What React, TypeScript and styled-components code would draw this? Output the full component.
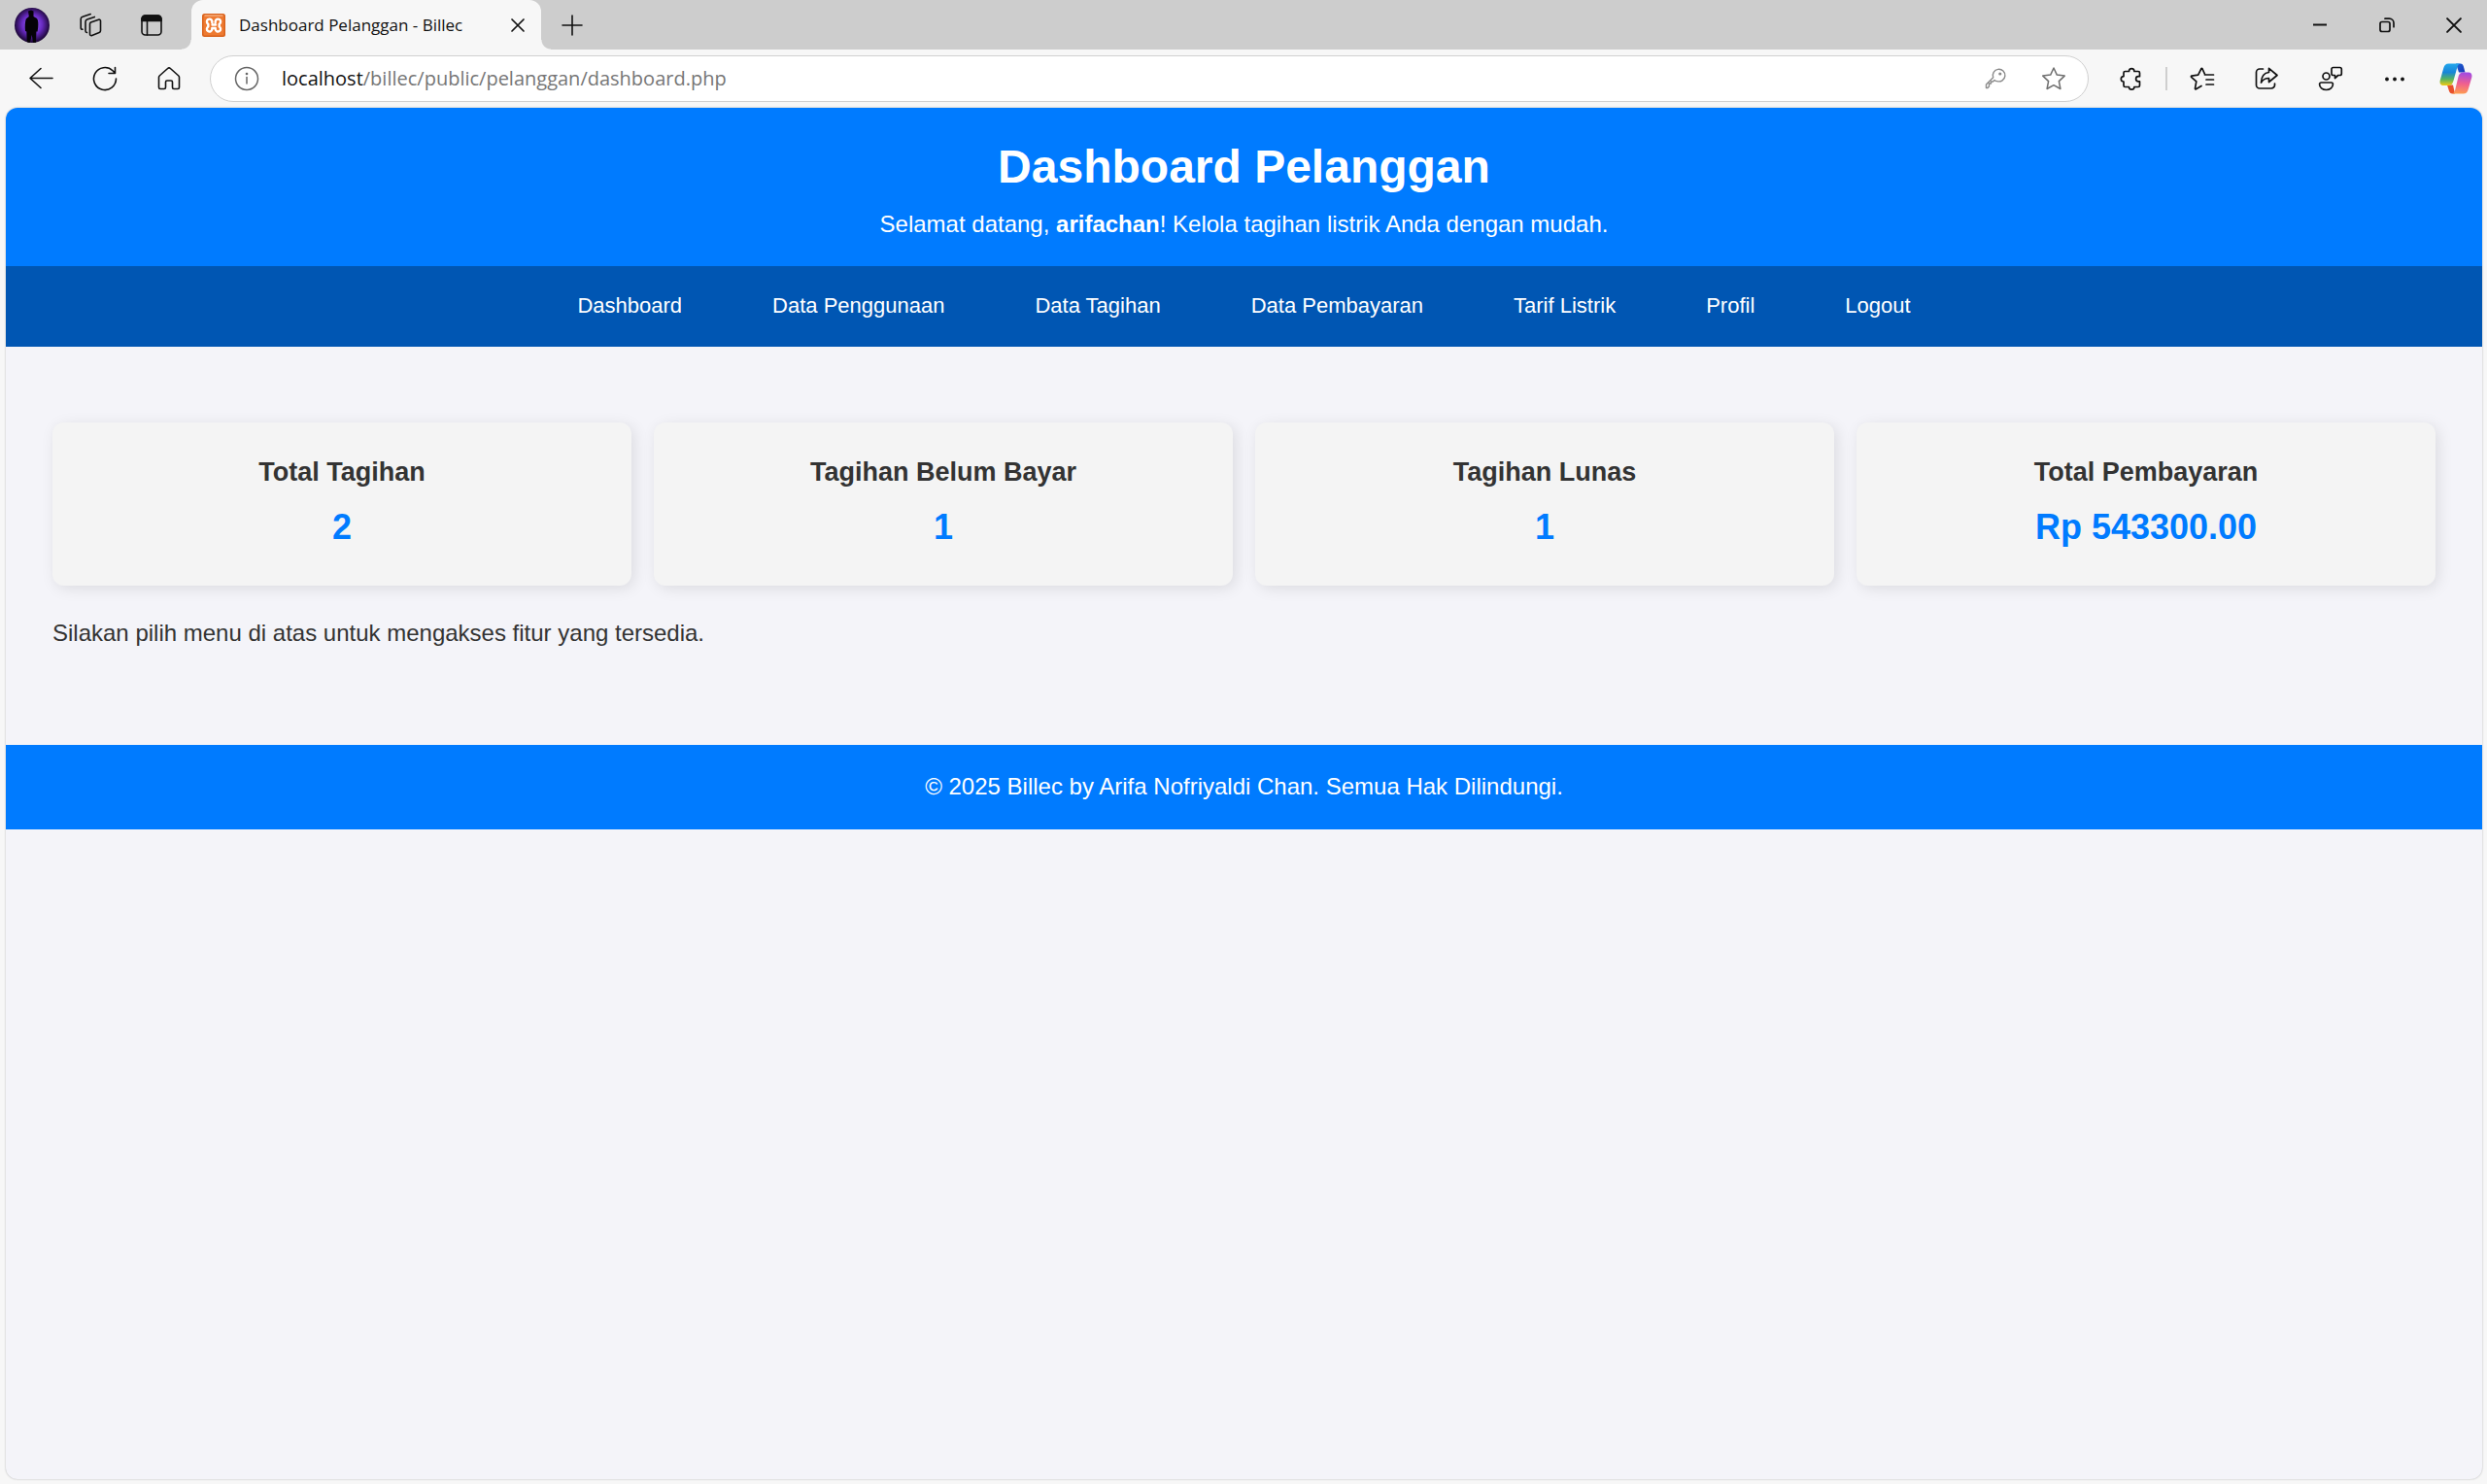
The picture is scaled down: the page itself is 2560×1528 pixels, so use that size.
import React from "react";
import styled, { createGlobalStyle, css } from "styled-components";

const GlobalStyle = createGlobalStyle`
  * { box-sizing: border-box; }
  body {
    margin: 0;
    background: #f7f7f7;
    font-family: "Liberation Sans", Arial, sans-serif;
  }
  button { font: inherit; cursor: pointer; }
`;

const uiFont = css`
  font-family: "Open Sans", "Noto Sans", sans-serif;
`;

const Window = styled.div`
  min-height: 100vh;
  display: flex;
  flex-direction: column;
  background: #f7f7f7;
`;

const TabStrip = styled.div`
  display: flex;
  align-items: stretch;
  height: 51px;
  background: #cdcdcd;
`;

const IconButton = styled.button<{ $width?: number; $color?: string }>`
  display: flex;
  align-items: center;
  justify-content: center;
  flex: none;
  width: ${(p) => p.$width ?? 66}px;
  padding: 0;
  border: 0;
  background: transparent;
  color: ${(p) => p.$color ?? "#111"};
`;

const Tab = styled.div`
  position: relative;
  display: flex;
  align-items: center;
  gap: 14px;
  width: 360px;
  margin-left: 5px;
  padding-left: 11px;
  border-radius: 12px 12px 0 0;
  background: #f7f7f7;

  &::before,
  &::after {
    content: "";
    position: absolute;
    bottom: 0;
    width: 10px;
    height: 10px;
  }
  &::before {
    right: 100%;
    background: radial-gradient(circle at 0 0, transparent 9px, #f7f7f7 10px);
  }
  &::after {
    left: 100%;
    background: radial-gradient(circle at 100% 0, transparent 9px, #f7f7f7 10px);
  }
`;

const TabTitle = styled.span`
  ${uiFont}
  flex: 1;
  font-size: 17px;
  line-height: 24px;
  white-space: nowrap;
  color: #111;
`;

const WindowControls = styled.div`
  display: flex;
  margin-left: auto;
`;

const Toolbar = styled.div`
  display: flex;
  align-items: stretch;
  height: 60px;
  padding: 0 2px 0 9px;
`;

const AddressBar = styled.label`
  display: flex;
  align-items: center;
  flex: 1;
  margin: 6px 11px 6px 9px;
  border: 1px solid #d0d0d0;
  border-radius: 24px;
  background: #fff;
`;

const addressText = css`
  ${uiFont}
  font-size: 20px;
  line-height: 28px;
`;

const Host = styled.span`
  ${addressText}
  color: #111;
`;

const PathInput = styled.input`
  ${addressText}
  flex: 1;
  min-width: 0;
  padding: 0;
  border: 0;
  outline: 0;
  background: transparent;
  color: #767676;
`;

const Separator = styled.span`
  align-self: center;
  width: 2px;
  height: 24px;
  margin: 0 3px 0 2px;
  background: #cfcfcf;
`;

const Page = styled.div`
  flex: 1;
  margin: 0 5px 5px 6px;
  overflow: hidden;
  border-radius: 12px;
  background: #f4f4f9;
  box-shadow: 0 0 2px rgba(0, 0, 0, 0.3);
  color: #333;
`;

const Header = styled.header`
  padding: 30px 24px 24px;
  background: #007bff;
  color: #fff;
  text-align: center;
`;

const Title = styled.h1`
  margin: 0 0 9px;
  font-size: 48px;
  line-height: 62px;
`;

const Text = styled.p`
  margin: 0;
  font-size: 24px;
  line-height: 38px;
`;

const Nav = styled.nav`
  display: flex;
  flex-wrap: wrap;
  justify-content: center;
  gap: 0 93px;
  padding: 23px 24px 24px;
  background: #0056b3;
`;

const NavLink = styled.a`
  color: #fff;
  font-size: 22px;
  line-height: 36px;
  text-decoration: none;
`;

const Main = styled.main`
  padding: 78px 48px 96px;
`;

const Cards = styled.div`
  display: grid;
  grid-template-columns: repeat(4, 1fr);
  gap: 23px;
  margin-bottom: 30px;
`;

const Card = styled.section`
  padding: 30px;
  border-radius: 12px;
  background: #f4f4f4;
  box-shadow: 3px 3px 15px rgba(0, 0, 0, 0.1);
  text-align: center;
`;

const CardTitle = styled.h3`
  margin: 0 0 6px;
  font-size: 27px;
  line-height: 42px;
`;

const CardValue = styled.p`
  margin: 0;
  color: #007bff;
  font-size: 36px;
  font-weight: bold;
  line-height: 60px;
`;

const Footer = styled.footer`
  padding: 24px 24px 25px;
  background: #007bff;
  color: #fff;
  text-align: center;
`;

const Line = ({ children, size = 26, w = 1.6 }: { children: React.ReactNode; size?: number; w?: number }) => (
  <svg width={size} height={size} viewBox="0 0 26 26" fill="none" stroke="currentColor" strokeWidth={w} strokeLinecap="round" strokeLinejoin="round" aria-hidden="true">
    {children}
  </svg>
);

const Avatar = () => (
  <svg width="36" height="36" viewBox="0 0 36 36" aria-hidden="true">
    <defs>
      <radialGradient id="glow" cx=".5" cy=".48" r=".52">
        <stop offset="0" stopColor="#a070ff" />
        <stop offset=".55" stopColor="#6a2cc4" />
        <stop offset="1" stopColor="#180430" />
      </radialGradient>
      <clipPath id="round"><circle cx="18" cy="18" r="18" /></clipPath>
    </defs>
    <g clipPath="url(#round)">
      <rect width="36" height="36" fill="url(#glow)" />
      <path d="M14 3.500l3-1 2.500 1v5.500l3.500 2c1.500 2 1.500 6 1.200 9l-.6 4.500h-1.200L22 36h-3l-1.200-8-2 8h-3l-.5-11.500-1.300-.5c-.5-5-.2-9.500.8-12.500l3-2.500z" fill="#050208" />
    </g>
  </svg>
);

const Workspaces = () => (
  <Line>
    <path d="M13.500 10l8-2.800a1.500 1.500 0 0 1 2 1.400v10a2 2 0 0 1-1.300 1.900l-7.500 3a1.500 1.500 0 0 1-2.200-1.400V12a2 2 0 0 1 1-2z" />
    <path d="M9.500 20.500a1.800 1.800 0 0 1-1.500-1.800V9.500A2.500 2.500 0 0 1 9.700 7l7.600-2.600" />
    <path d="M5 17.200a1.800 1.800 0 0 1-1.800-1.800V6.500A2.500 2.500 0 0 1 5 4.200l8.200-2.700" />
  </Line>
);

const TabActions = () => (
  <Line>
    <rect x="3" y="3" width="20" height="20" rx="3.500" />
    <path d="M3 8.500V6.500A3.500 3.500 0 0 1 6.500 3h13A3.500 3.500 0 0 1 23 6.500v2z" fill="currentColor" />
    <path d="M8.500 8.500V23" />
  </Line>
);

const Xampp = () => (
  <svg width="24" height="24" viewBox="0 0 24 24" aria-hidden="true">
    <rect width="24" height="24" rx="2.500" fill="#d9621c" />
    <rect x="1.500" y="1.500" width="21" height="21" rx="1.500" fill="#ee7a31" />
    <path d="M2.500 2h19" stroke="#f9c6a2" />
    <path d="M10.300 9.200V8a2.700 2.700 0 1 0-4 2.700v2.800a2.700 2.700 0 1 0 4 2.700V15h3.400v1.200a2.700 2.700 0 1 0 4-2.700v-2.800a2.700 2.700 0 1 0-4-2.700v1.200M10.500 11.500h3.500" fill="none" stroke="#fff" strokeWidth="2.400" strokeLinejoin="round" strokeLinecap="round" />
  </svg>
);

const Close = ({ size = 26 }: { size?: number }) => (
  <Line size={size} w={1.7}><path d="M7 7l12 12M19 7L7 19" /></Line>
);

const Plus = () => <Line><path d="M13 3v20M3 13h20" /></Line>;
const Minimize = () => <Line w={2}><path d="M6 12.500h14" strokeLinecap="butt" /></Line>;
const Restore = () => (
  <Line w={1.7}>
    <rect x="6" y="9.500" width="10" height="10" rx="2" />
    <path d="M11 6.200h4.500a4.500 4.500 0 0 1 4.500 4.500v4" />
  </Line>
);

const Back = () => <Line><path d="M25 12.500H2M13 2.500l-11 10 11 10" /></Line>;
const Refresh = () => (
  <Line><path d="M24.500 13A11.500 11.500 0 1 1 21 4.800l2.500 2.600M23.500 1.500v6h-6.500" /></Line>
);
const Home = () => (
  <Line><path d="M2.500 11.500a2 2 0 0 1 .7-1.500l8.400-7.500a2 2 0 0 1 2.800 0l8.400 7.500a2 2 0 0 1 .7 1.500V22a1.500 1.500 0 0 1-1.500 1.500h-4A1.500 1.500 0 0 1 16.500 22v-5.500A1.500 1.500 0 0 0 15 15h-4a1.500 1.500 0 0 0-1.500 1.500V22A1.500 1.500 0 0 1 8 23.500H4A1.500 1.500 0 0 1 2.500 22z" /></Line>
);
const Info = () => (
  <Line w={1.5}><circle cx="13" cy="13" r="11.500" /><path d="M13 11.500v6.500" /><circle cx="13" cy="8" r=".6" fill="currentColor" /></Line>
);
const Key = () => (
  <Line w={1.4}>
    <path d="M12 14.500l-1.500 1.500H8.500v2h-2v3l-1.500 1.500H3.500v-3.500l7.200-7.200a6.300 6.300 0 1 1 4 3.800c-1 0-1.900-.3-2.700-1.100z" />
    <circle cx="17.800" cy="8" r=".9" fill="currentColor" />
  </Line>
);
const Star = () => (
  <Line w={1.5}><path d="M13 2l3.300 7.100 7.900 1-5.800 5.500 1.500 7.900-6.900-3.800-6.900 3.800 1.500-7.900L1.800 10.100l7.900-1z" /></Line>
);
const Puzzle = () => (
  <Line w={1.7}><path d="M5 7a1.500 1.500 0 0 1 1.500-1.500h4a2.700 2.900 0 0 1 5.400 0h4.100A1.500 1.500 0 0 1 21.500 7v3.700h-1.300a2.600 2.600 0 0 0 0 5.200h1.300V20a1.500 1.500 0 0 1-1.500 1.500h-4.100a2.700 2.700 0 0 1-5.400 0h-4A1.500 1.500 0 0 1 5 20v-4a2.700 2.700 0 0 1 0-5.400z" /></Line>
);
const Favorites = () => (
  <Line w={1.7}>
    <path d="M12 20.500l-5.500 3.300a.7.7 0 0 1-1-.7l1.300-7.200-5.200-4.600a.7.700 0 0 1 .4-1.200l6.700-.9 3.100-6.400a.7.700 0 0 1 1.200 0l2.600 5.700M15.500 9h9M17 14h7.500M17 19h7.500" />
  </Line>
);
const Share = () => (
  <Line w={1.7}>
    <path d="M9.500 3H6a3.500 3.500 0 0 0-3.500 3.500v13A3.500 3.500 0 0 0 6 23h12a3.500 3.500 0 0 0 3.500-3.500V18" />
    <path d="M15.500 2.300l8.500 7.200-8.500 7V12.500c-3.500 0-6 1-8 4.500.3-6 3-10 8-10.500z" />
  </Line>
);
const Feedback = () => (
  <Line w={1.7}>
    <circle cx="8.500" cy="10.500" r="3.500" />
    <path d="M3.300 17h10.400a1.700 1.700 0 0 1 1.700 1.700c0 3.300-3 5.800-6.900 5.800s-6.900-2.500-6.900-5.800A1.700 1.700 0 0 1 3.300 17z" />
    <path d="M15.800 1.500h6.700a1.800 1.800 0 0 1 1.800 1.800v4.400a1.800 1.800 0 0 1-1.800 1.800h-1.700l-3.300 3v-3h-1.700A1.800 1.800 0 0 1 14 7.700V3.300a1.800 1.800 0 0 1 1.800-1.800z" />
  </Line>
);
const More = () => (
  <svg width="26" height="26" viewBox="0 0 26 26" fill="currentColor" aria-hidden="true">
    <circle cx="5" cy="13.500" r="1.900" /><circle cx="13" cy="13.500" r="1.900" /><circle cx="21" cy="13.500" r="1.900" />
  </svg>
);
const Copilot = () => (
  <svg width="34" height="32" viewBox="0 0 34 32" aria-hidden="true">
    <defs>
      <linearGradient id="cool" x1="0" y1="0" x2="0" y2="1">
        <stop offset="0" stopColor="#22a7ec" /><stop offset=".4" stopColor="#1785d8" />
        <stop offset=".7" stopColor="#52b264" /><stop offset="1" stopColor="#f2cb12" />
      </linearGradient>
      <linearGradient id="warm" x1=".3" y1="0" x2=".2" y2="1">
        <stop offset="0" stopColor="#a44be0" /><stop offset=".5" stopColor="#f0608e" />
        <stop offset="1" stopColor="#ffa04e" />
      </linearGradient>
      <linearGradient id="navy" x1="0" y1="0" x2="1" y2="1">
        <stop offset="0" stopColor="#1b63d4" /><stop offset="1" stopColor="#1a36b4" />
      </linearGradient>
    </defs>
    <path d="M17 .5h4.500c2 0 2.800 1 3.400 3L26.500 9.500H20z" fill="url(#navy)" />
    <path d="M8 22.500h6l2 9h-2.500c-2 0-3-1-3.600-3z" fill="#e8512c" />
    <path d="M9.500.5H22c-2 0-3 1.500-3.700 4L14.500 18c-.8 3-2 5-5 5H4C1 23 0 20.500 .8 17.500L4.300 5C5.200 2 6.500.5 9.500.5z" fill="url(#cool)" />
    <path d="M24.500 31.500H12.500c2 0 3-1.500 3.700-4L19.500 14c.8-3 2-4.500 5-4.500H30c3 0 4 2.500 3.200 5.500L29.700 27c-.9 3-2.200 4.500-5.200 4.500z" fill="url(#warm)" />
  </svg>
);

const links = ["Dashboard", "Data Penggunaan", "Data Tagihan", "Data Pembayaran", "Tarif Listrik", "Profil", "Logout"];

const stats = [
  { title: "Total Tagihan", value: "2" },
  { title: "Tagihan Belum Bayar", value: "1" },
  { title: "Tagihan Lunas", value: "1" },
  { title: "Total Pembayaran", value: "Rp 543300.00" },
];

export default function App() {
  return (
    <Window>
      <GlobalStyle />
      <TabStrip>
        <IconButton aria-label="Profile"><Avatar /></IconButton>
        <IconButton $width={54} aria-label="Workspaces"><Workspaces /></IconButton>
        <IconButton $width={72} aria-label="Tab actions"><TabActions /></IconButton>
        <Tab>
          <Xampp />
          <TabTitle>Dashboard Pelanggan - Billec</TabTitle>
          <IconButton $width={48} aria-label="Close tab"><Close /></IconButton>
        </Tab>
        <IconButton $width={64} aria-label="New tab"><Plus /></IconButton>
        <WindowControls>
          <IconButton $width={69} aria-label="Minimize"><Minimize /></IconButton>
          <IconButton $width={69} aria-label="Restore"><Restore /></IconButton>
          <IconButton $width={69} aria-label="Close"><Close size={30} /></IconButton>
        </WindowControls>
      </TabStrip>
      <Toolbar>
        <IconButton aria-label="Back"><Back /></IconButton>
        <IconButton aria-label="Refresh"><Refresh /></IconButton>
        <IconButton aria-label="Home"><Home /></IconButton>
        <AddressBar>
          <IconButton $width={73} $color="#666" aria-label="Site information"><Info /></IconButton>
          <Host>localhost</Host>
          <PathInput aria-label="Address" defaultValue="/billec/public/pelanggan/dashboard.php" />
          <IconButton $width={50} $color="#8a8a8a" aria-label="Passwords"><Key /></IconButton>
          <IconButton $width={70} $color="#6e6e6e" aria-label="Add to favorites"><Star /></IconButton>
        </AddressBar>
        <IconButton aria-label="Extensions"><Puzzle /></IconButton>
        <Separator />
        <IconButton aria-label="Favorites"><Favorites /></IconButton>
        <IconButton aria-label="Share"><Share /></IconButton>
        <IconButton aria-label="Feedback"><Feedback /></IconButton>
        <IconButton aria-label="More"><More /></IconButton>
        <IconButton $width={60} aria-label="Copilot"><Copilot /></IconButton>
      </Toolbar>
      <Page>
        <Header>
          <Title>Dashboard Pelanggan</Title>
          <Text>
            Selamat datang, <strong>arifachan</strong>! Kelola tagihan listrik Anda dengan mudah.
          </Text>
        </Header>
        <Nav>
          {links.map((label) => (
            <NavLink key={label} href="#">{label}</NavLink>
          ))}
        </Nav>
        <Main>
          <Cards>
            {stats.map((s) => (
              <Card key={s.title}>
                <CardTitle>{s.title}</CardTitle>
                <CardValue>{s.value}</CardValue>
              </Card>
            ))}
          </Cards>
          <Text>Silakan pilih menu di atas untuk mengakses fitur yang tersedia.</Text>
        </Main>
        <Footer>
          <Text>© 2025 Billec by Arifa Nofriyaldi Chan. Semua Hak Dilindungi.</Text>
        </Footer>
      </Page>
    </Window>
  );
}
